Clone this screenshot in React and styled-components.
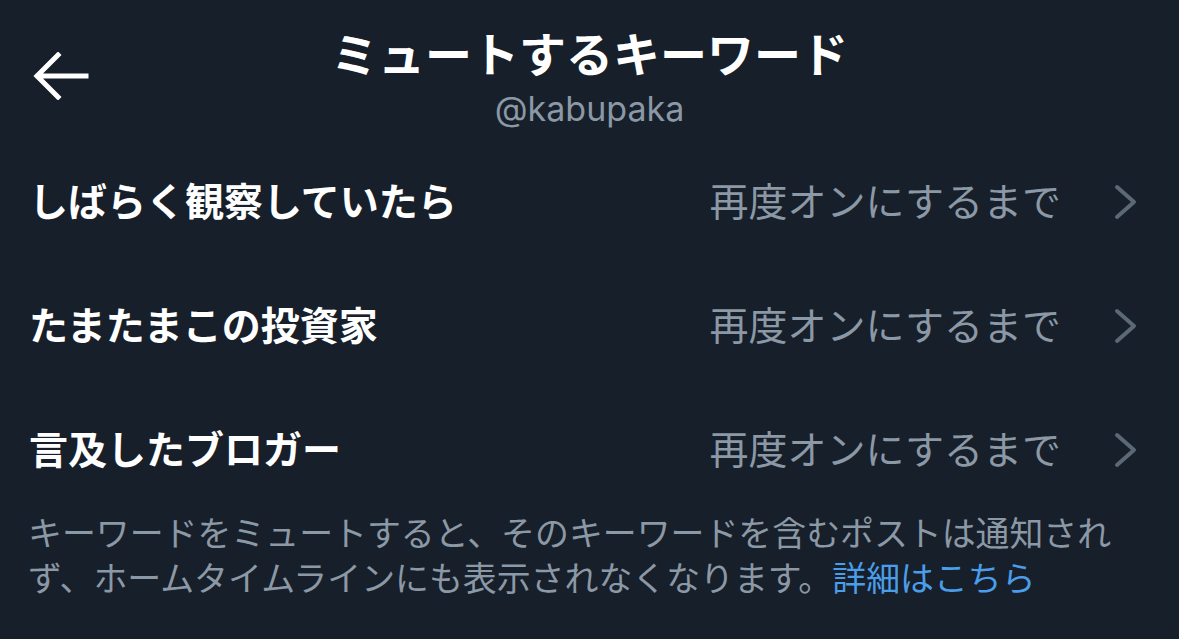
import React from "react";
import styled, { createGlobalStyle } from "styled-components";

const Global = createGlobalStyle`
  html, body { margin: 0; padding: 0; background: #171f2a; }
  body { font-family: "Noto Sans CJK JP", "Noto Sans", sans-serif; }
`;

const Page = styled.div`
  width: 1179px;
  height: 639px;
  background: #171f2a;
  color: #ffffff;
  overflow: hidden;
`;

const Header = styled.header`
  display: grid;
  grid-template-columns: 1fr auto 1fr;
  height: 137px;
  box-sizing: border-box;
  padding-top: 24px;
`;

const BackButton = styled.button`
  justify-self: start;
  align-self: start;
  margin: 28px 0 0 32px;
  padding: 0;
  border: 0;
  background: none;
  width: 58px;
  height: 48px;
  display: flex;
  align-items: center;
  justify-content: center;
  cursor: pointer;
`;

const TitleBlock = styled.div`
  display: flex;
  flex-direction: column;
  align-items: center;
`;

const Title = styled.h1`
  margin: 0;
  font-size: 47px;
  line-height: 56px;
  font-weight: 700;
  color: #ffffff;
  letter-spacing: 0;
`;

const Handle = styled.div`
  font-family: "Inter", "Noto Sans", sans-serif;
  font-size: 34px;
  line-height: 40px;
  margin-top: 9px;
  color: #8b98a5;
`;

const List = styled.ul`
  list-style: none;
  margin: 0;
  padding: 0;
`;

const Row = styled.li`
  display: flex;
  align-items: center;
  height: 124px;
  padding: 0 40px 0 29px;
`;

const Keyword = styled.span`
  flex: 1;
  font-size: 39px;
  font-weight: 700;
  color: #ffffff;
  white-space: nowrap;
`;

const Duration = styled.span`
  font-size: 39px;
  font-weight: 400;
  color: #8b98a5;
  white-space: nowrap;
`;

const ChevronWrap = styled.span`
  display: flex;
  align-items: center;
  margin-left: 52px;
  padding-top: 6px;
`;

const Note = styled.p`
  margin: 0;
  padding: 0 28px;
  font-size: 33.9px;
  line-height: 45px;
  color: #8b98a5;
`;

const Link = styled.a`
  color: #4a9de8;
  text-decoration: none;
`;

const BackArrow = () => (
  <svg width="58" height="48" viewBox="0 0 58 48" fill="none">
    <path
      d="M54 24H6M26 3L5 24l21 21"
      stroke="#ffffff"
      strokeWidth="5"
      strokeLinecap="square"
      strokeLinejoin="miter"
    />
  </svg>
);

const Chevron = () => (
  <svg width="26" height="36" viewBox="0 0 26 36" fill="none">
    <path
      d="M4 3l17 15L4 33"
      stroke="#5b6875"
      strokeWidth="4"
      strokeLinecap="round"
      strokeLinejoin="round"
    />
  </svg>
);

const rows = ["しばらく観察していたら", "たまたまこの投資家", "言及したブロガー"];

export default function App() {
  return (
    <>
      <Global />
      <Page>
        <Header>
          <BackButton aria-label="戻る">
            <BackArrow />
          </BackButton>
          <TitleBlock>
            <Title>ミュートするキーワード</Title>
            <Handle>@kabupaka</Handle>
          </TitleBlock>
          <div />
        </Header>
        <List>
          {rows.map((r) => (
            <Row key={r}>
              <Keyword>{r}</Keyword>
              <Duration>再度オンにするまで</Duration>
              <ChevronWrap>
                <Chevron />
              </ChevronWrap>
            </Row>
          ))}
        </List>
        <Note>
          キーワードをミュートすると、そのキーワードを含むポストは通知されず、ホームタイムラインにも表示されなくなります。<Link href="#">詳細はこちら</Link>
        </Note>
      </Page>
    </>
  );
}
